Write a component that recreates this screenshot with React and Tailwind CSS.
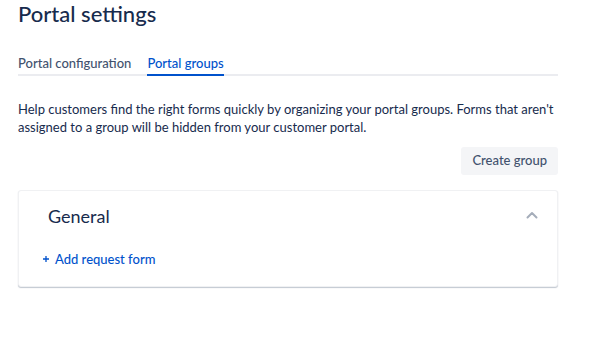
import React from 'react';

export default function App() {
  return (
    <div className="min-h-[358px] w-[601px] bg-white pl-[18px] text-[#172b4d]" style={{ fontFamily: 'Lato, "Open Sans", sans-serif' }}>
      <div className="w-[540px]">
        <h1 className="text-[22px] leading-[28px] font-medium">Portal settings</h1>

        {/* Tabs */}
        <div className="mt-[27px] flex gap-[16px] border-b-2 border-[#ebecf0] text-[13px] leading-[16px] font-medium">
          <div className="-mb-[2px] border-b-2 border-transparent pb-[3px] text-[#42526e]">Portal configuration</div>
          <div className="-mb-[2px] border-b-2 border-[#0052cc] pb-[3px] text-[#0052cc]">Portal groups</div>
        </div>

        <p className="mt-[24px] whitespace-nowrap text-[13px] leading-[18px]">
          Help customers find the right forms quickly by organizing your portal groups. Forms that aren't
          <br />
          assigned to a group will be hidden from your customer portal.
        </p>

        <div className="mt-[11px] flex justify-end">
          <button className="h-[28px] rounded-[3px] bg-[#f4f5f7] px-[11px] text-[13px] font-medium text-[#42526e]">
            Create group
          </button>
        </div>

        {/* Group card */}
        <div className="mt-[15px] rounded-[3px] border border-[#f0f1f3] bg-white shadow-[0_1px_1px_rgba(9,30,66,0.25)]">
          <div className="flex items-center justify-between pl-[29px] pr-[19px] pt-[13px]">
            <span className="text-[18px] leading-[24px]">General</span>
            <svg width="12" height="8" viewBox="0 0 12 8" fill="none" className="mt-[-2px]">
              <path d="M1.5 6.5 L6 2 L10.5 6.5" stroke="#a5adba" strokeWidth="2" strokeLinecap="round" strokeLinejoin="round" />
            </svg>
          </div>
          <div className="flex items-center gap-[6px] pb-[19px] pl-[24px] pt-[23px] text-[13px] leading-[16px] text-[#0052cc]">
            <svg width="6" height="6" viewBox="0 0 6 6" className="-mt-[1px]">
              <path d="M3 0 V6 M0 3 H6" stroke="#0052cc" strokeWidth="1.3" />
            </svg>
            <span className="font-medium">Add request form</span>
          </div>
        </div>
      </div>
    </div>
  );
}
